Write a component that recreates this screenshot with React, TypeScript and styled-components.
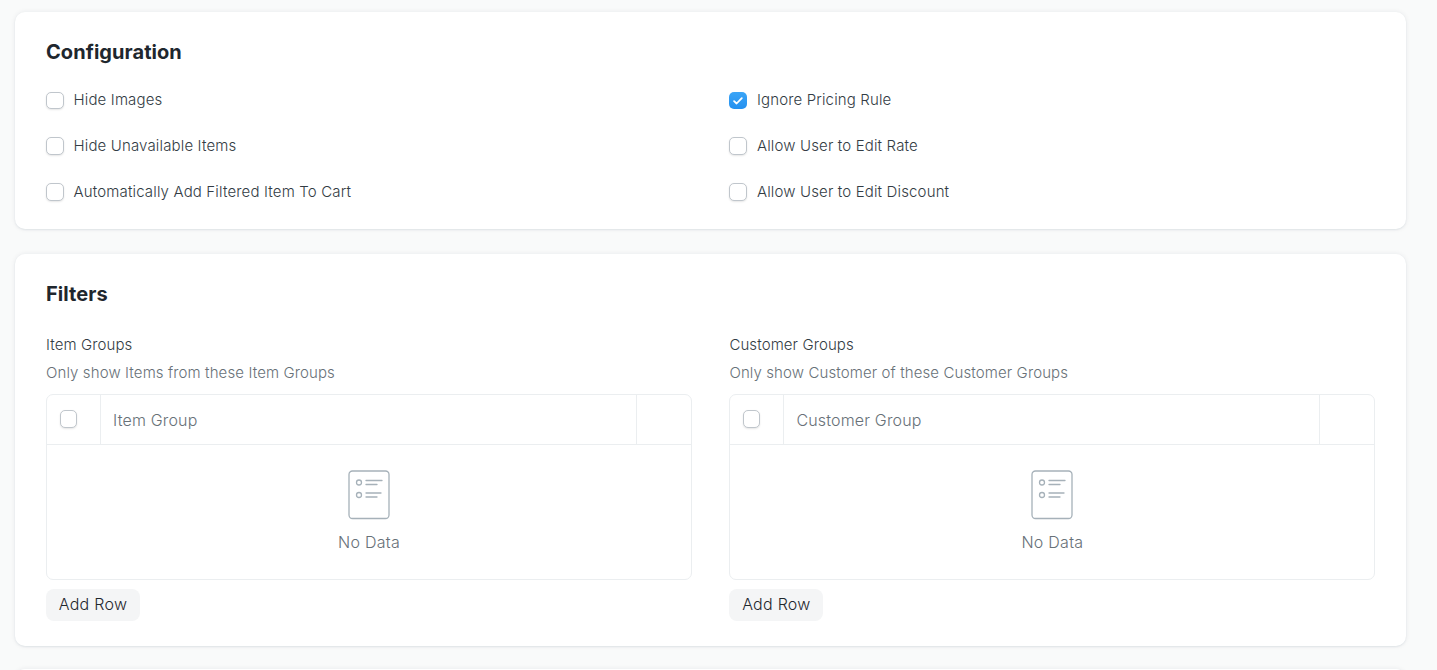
import React from "react";
import styled, { createGlobalStyle } from "styled-components";

const Global = createGlobalStyle`
  * { box-sizing: border-box; }
  body { margin: 0; background: #f9fafa; font-family: Inter, sans-serif; font-weight: 350; color: #333c44; font-size: 15px; }
  h2, p { margin: 0; }
`;
const Page = styled.main`
  display: flex; flex-direction: column; gap: 24px; height: 670px; overflow: hidden; padding: 12px 31px 0 15px;
`;
const Card = styled.section<{ $height: number; $after?: number }>`
  flex: none; height: ${(p) => p.$height}px; margin-bottom: ${(p) => p.$after ?? 0}px; padding: 25px 31px; background: #fff; border-radius: 10px;
  box-shadow: 0 0 5px rgba(17,43,66,.08), 0 1px 2px rgba(17,43,66,.07);
`;
const Title = styled.h2`
  font-size: 20px; line-height: 30px; font-weight: 650; color: #1f272e; letter-spacing: .06px;
`;
const Columns = styled.div<{ $top: number }>`
  display: grid; grid-template-columns: 646px 646px; column-gap: 37.4px; margin-top: ${(p) => p.$top}px;
`;
const Box = styled.span<{ $on?: boolean }>`
  display: flex; align-items: center; justify-content: center; flex: none; width: 18px; height: 18px; border-radius: 5px;
  border: ${(p) => (p.$on ? "0" : "1px solid #c0c6cc")};
  background: ${(p) => (p.$on ? "linear-gradient(180deg, #3ba5f7, #2490ef)" : "#fff")};
  box-shadow: ${(p) => (p.$on ? "none" : "0 1px 2px rgba(0,0,0,.1)")};
`;
const CheckLabel = styled.label`
  display: flex; align-items: center; gap: 9.5px; height: 24px; line-height: 22px; letter-spacing: .15px;
`;
const Stack = styled.div`
  display: flex; flex-direction: column; gap: 22px;
  ${CheckLabel}:first-child ${Box} { height: 17px; margin-top: 1px; }
`;
const Label = styled.p` line-height: 22px; letter-spacing: .1px; `;
const Hint = styled.p` line-height: 22px; margin-top: 6px; color: #687178; letter-spacing: .11px; `;
const Grid = styled.div`
  height: 186px; margin-top: 10px; border: 1px solid #ebeef0; border-radius: 7px;
`;
const Head = styled.div`
  display: grid; grid-template-columns: 53px 1fr 55px; height: 50px; border-bottom: 1px solid #ebeef0;
  font-size: 16px; line-height: 24px; color: #687178; font-weight: 360; letter-spacing: .17px;
`;
const Cell = styled.div`
  display: flex; align-items: center; padding-left: 12px;
  & + & { border-left: 1px solid #ebeef0; padding-top: 1px; }
`;
const SelectCell = styled(Cell)`
  padding-left: 13px;
  ${Box} { width: 17px; }
`;
const Empty = styled.div`
  display: flex; flex-direction: column; align-items: center; padding-top: 25px; font-size: 16px; font-weight: 360; line-height: 24px; color: #687178; letter-spacing: .26px;
  svg { margin-bottom: 10px; }
`;
const Button = styled.button`
  display: block; margin-top: 9px; width: 94px; height: 32px; padding: 0 0 1px; border: 0; border-radius: 8px; background: #f4f5f6;
  font: 360 16px/24px Inter, sans-serif; color: #1f272e; letter-spacing: .26px;
`;

function Check({ on }: { on?: boolean }) {
  return (
    <Box $on={on}>
      {on && (
        <svg width="10" height="8" viewBox="0 0 10 8" fill="none">
          <path d="M1.1 4.2 3.6 6.5 8.8 1.1" stroke="#fff" strokeWidth="1.8" strokeLinecap="round" strokeLinejoin="round" />
        </svg>
      )}
    </Box>
  );
}

function Option({ text, on }: { text: string; on?: boolean }) {
  return <CheckLabel><Check on={on} /><span>{text}</span></CheckLabel>;
}

function ListIcon() {
  return (
    <svg width="42" height="50" viewBox="0 0 42 50" fill="none" stroke="#a6b1b9" strokeWidth="1.3">
      <rect x="1" y="1" width="40" height="47.5" rx="3.5" />
      <circle cx="11" cy="12.5" r="2.5" /><circle cx="11" cy="25" r="2.5" />
      <path d="M18 10.5h16M18 14.5h11M18 23h15M18 27h11" strokeLinecap="round" />
    </svg>
  );
}

function GroupTable({ label, hint, column }: { label: string; hint: string; column: string }) {
  return (
    <div>
      <Label>{label}</Label>
      <Hint>{hint}</Hint>
      <Grid>
        <Head><SelectCell><Check /></SelectCell><Cell>{column}</Cell><Cell /></Head>
        <Empty><ListIcon /><span>No Data</span></Empty>
      </Grid>
      <Button>Add Row</Button>
    </div>
  );
}

export default function App() {
  return (
    <>
      <Global />
      <Page>
        <Card $height={217} $after={0.5}>
          <Title>Configuration</Title>
          <Columns $top={21}>
            <Stack>
              <Option text="Hide Images" />
              <Option text="Hide Unavailable Items" />
              <Option text="Automatically Add Filtered Item To Cart" />
            </Stack>
            <Stack>
              <Option text="Ignore Pricing Rule" on />
              <Option text="Allow User to Edit Rate" />
              <Option text="Allow User to Edit Discount" />
            </Stack>
          </Columns>
        </Card>
        <Card $height={392} $after={-0.5}>
          <Title>Filters</Title>
          <Columns $top={25}>
            <GroupTable label="Item Groups" hint="Only show Items from these Item Groups" column="Item Group" />
            <GroupTable label="Customer Groups" hint="Only show Customer of these Customer Groups" column="Customer Group" />
          </Columns>
        </Card>
        <Card $height={60} />
      </Page>
    </>
  );
}
